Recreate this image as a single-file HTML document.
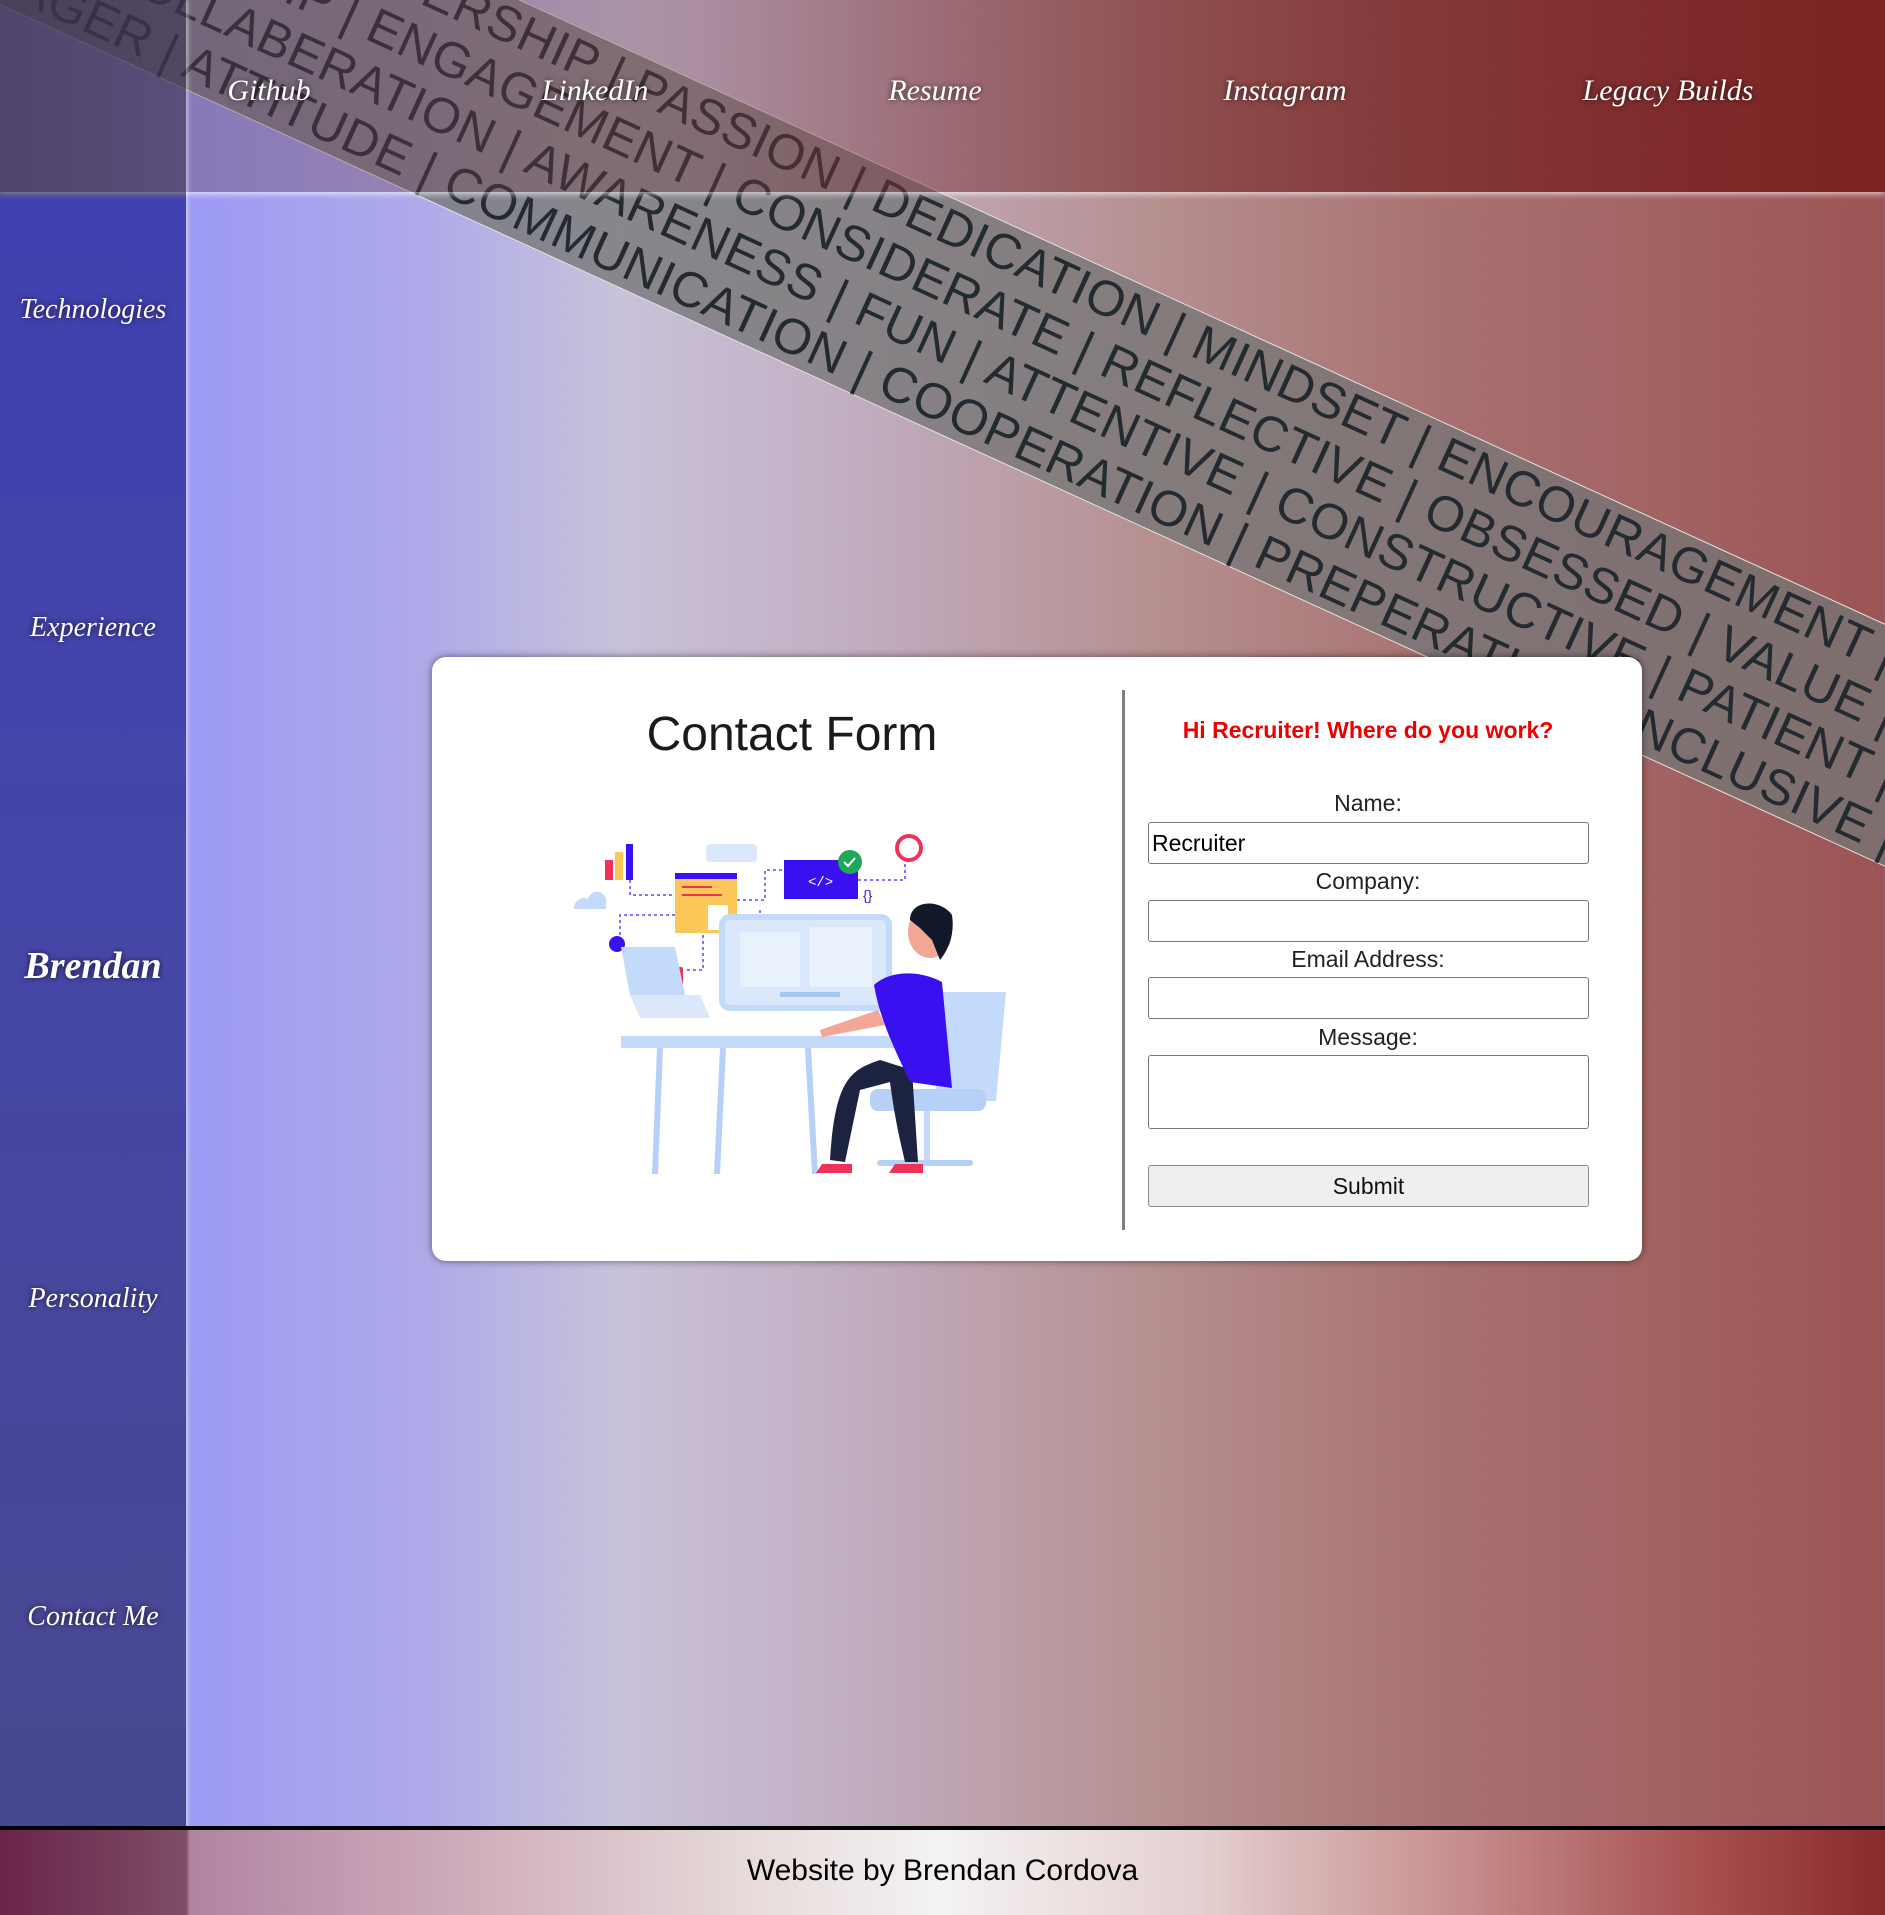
<!DOCTYPE html>
<html><head><meta charset="utf-8"><style>
*{margin:0;padding:0;box-sizing:border-box}
html,body{width:1885px;height:1915px;overflow:hidden}
body{position:relative;font-family:"Liberation Sans",sans-serif;background:linear-gradient(90deg,#9c9af4 186px,#aeaaea 420px,#c8c2da 620px,#c2aec2 850px,#b69090 1150px,#a87070 1450px,#9c5454 1885px)}
.band{position:absolute;left:0;top:-238px;width:2200px;height:221px;transform-origin:0 0;transform:rotate(24.57deg);background:rgba(118,118,118,0.78);border-top:1px solid rgba(255,255,255,.8);border-bottom:1px solid rgba(255,255,255,.8);z-index:1}
.band div{display:flex;justify-content:flex-end;white-space:nowrap;height:55px;line-height:55px;font-size:50px;color:#232a30;letter-spacing:0.5px}
.hdr{position:absolute;left:0;top:0;width:1885px;height:192px;z-index:2;background:linear-gradient(90deg,rgba(70,50,70,.55) 0,rgba(95,60,80,.35) 186px,rgba(120,60,70,.35) 700px,rgba(120,40,40,.7) 1300px,rgba(122,32,32,.95) 1885px);box-shadow:0 2px 6px rgba(255,255,255,.7)}
.hdr span,.side span{position:absolute;color:#fff;font-family:"Liberation Serif",serif;font-style:italic;text-shadow:0 0 6px rgba(0,0,0,.7);transform:translateX(-50%);white-space:nowrap}
.hdr span{top:74px;font-size:30px}
.side{position:absolute;left:0;top:0;width:186px;height:1915px;z-index:3;background:linear-gradient(180deg,rgba(60,50,80,.6) 0,rgba(60,50,80,.6) 192px,#4040b0 200px,#4646a8 900px,#484890 1828px);box-shadow:2px 0 4px rgba(255,255,255,.5)}
.side span{left:93px;font-size:28px}
.foot{position:absolute;left:0;top:1826px;width:1885px;height:89px;border-top:4px solid #000;z-index:4;background:linear-gradient(90deg,#6a2448 0,#7e4e68 186px,#b284a2 190px,#d2b2be 500px,#e8dcdc 760px,#f4f2f2 940px,#e4d0d0 1200px,#c89090 1450px,#a85050 1700px,#8a2a2a 1885px);text-align:center;font-size:30px;line-height:82px;color:#000}
.card{position:absolute;left:432px;top:657px;width:1210px;height:604px;background:#fff;border-radius:14px;box-shadow:0 0 8px rgba(0,0,0,.5);z-index:5}
.title{position:absolute;left:15px;width:690px;top:50px;text-align:center;font-size:48px;color:#1a1a1a}
.div{position:absolute;left:690px;top:33px;width:3px;height:540px;background:#808080}
.red{position:absolute;left:716px;width:440px;top:60px;text-align:center;color:#e00;font-size:23px;font-weight:bold}
.lab{position:absolute;left:716px;width:440px;text-align:center;font-size:23px;color:#222}
.inp{position:absolute;left:716px;width:441px;height:42px;border:1px solid #767676;border-radius:3px;background:#fff;font-size:23px;padding-left:3px;line-height:40px;color:#000}
.btn{position:absolute;left:716px;width:441px;top:508px;height:42px;border:1px solid #8a8a8a;border-radius:3px;background:#efefef;text-align:center;font-size:23px;line-height:40px;color:#111}
</style></head><body>
<div class="band">
<div style="padding-right:105px">MANAGEMENT | MENTORSHIP | LEADERSHIP | PASSION | DEDICATION | MINDSET | ENCOURAGEMENT |</div>
<div style="padding-right:80px">RELATIONSHIP | OWNERSHIP | ENGAGEMENT | CONSIDERATE | REFLECTIVE | OBSESSED | VALUE |</div>
<div style="padding-right:54px">TEAMWORK | COLLABERATION | AWARENESS | FUN | ATTENTIVE | CONSTRUCTIVE | PATIENT |</div>
<div style="padding-right:29px">PROJECT MANAGER | ATTITUDE | COMMUNICATION | COOPERATION | PREPERATION | INCLUSIVE |</div>
</div>
<div class="hdr">
<span style="left:269px">Github</span><span style="left:595px">LinkedIn</span><span style="left:935px">Resume</span><span style="left:1285px">Instagram</span><span style="left:1668px">Legacy Builds</span>
</div>
<div class="side">
<span style="top:294px">Technologies</span>
<span style="top:612px">Experience</span>
<span style="top:944px;font-size:38px;font-weight:bold">Brendan</span>
<span style="top:1283px">Personality</span>
<span style="top:1601px">Contact Me</span>
</div>
<div class="card">
<div class="title">Contact Form</div>
<svg style="position:absolute;left:128px;top:163px" width="480" height="370" viewBox="0 0 480 370">
<g fill="none" stroke="#5a4cf0" stroke-width="1.5" stroke-dasharray="3 3">
<path d="M70 60 V75 H118"/><path d="M177 80 H205 V50 H224"/><path d="M298 60 H345 V40"/><path d="M115 95 H60 V120"/><path d="M143 115 V150 H125"/><path d="M200 90 V115"/></g>
<rect x="45" y="40" width="8" height="20" fill="#f0325a"/><rect x="55" y="32" width="8" height="28" fill="#fcc85a"/><rect x="66" y="24" width="7" height="36" fill="#3a10f0"/>
<rect x="146" y="24" width="51" height="18" rx="4" fill="#dbe8fb"/>
<path d="M14 89 a10 10 0 0 1 14 -10 a9 9 0 0 1 18 4 v6 z" fill="#c4dafa"/>
<rect x="115" y="53" width="62" height="60" fill="#fcc85a"/><rect x="115" y="53" width="62" height="6" fill="#3a10f0"/>
<rect x="148" y="85" width="20" height="25" fill="#fff"/>
<g fill="#f0325a"><rect x="122" y="66" width="30" height="2"/><rect x="122" y="74" width="40" height="2"/></g>
<rect x="224" y="40" width="74" height="39" fill="#3a10f0"/><text x="248" y="66" fill="#fff" font-size="14" font-family="Liberation Mono">&lt;/&gt;</text>
<circle cx="290" cy="42" r="12" fill="#1fa85a"/><path d="M284 42 l4 4 l7 -8" stroke="#fff" stroke-width="2" fill="none"/>
<circle cx="349" cy="28" r="12" fill="none" stroke="#f0325a" stroke-width="4"/>
<text x="303" y="80" fill="#3a10f0" font-size="14">{}</text>
<circle cx="57" cy="124" r="8" fill="#3a10f0"/>
<path d="M198 118 a10 10 0 0 1 18 0 a8 8 0 0 1 0 14 h-22 a7 7 0 0 1 4 -14z" fill="#3a10f0"/>
<rect x="107" y="147" width="16" height="18" rx="2" fill="#f0325a"/>
<rect x="162" y="97" width="167" height="91" rx="8" fill="#dbe8fb" stroke="#c4dafa" stroke-width="6"/>
<rect x="180" y="112" width="60" height="55" fill="#e9f1fd"/><rect x="250" y="107" width="62" height="60" fill="#e9f1fd"/>
<rect x="220" y="172" width="60" height="5" fill="#a8c6f5"/>
<path d="M61 127 H115 L125 175 H70 Z" fill="#c4dafa"/><path d="M70 175 H140 L150 198 H80Z" fill="#dbe8fb"/>
<rect x="61" y="216" width="276" height="12" fill="#c4dafa"/>
<path d="M103 228 L98 354 L92 354 L97 228Z" fill="#b6d0f7"/><path d="M166 228 L160 354 L154 354 L160 228Z" fill="#b6d0f7"/><path d="M251 228 L258 354 L252 354 L245 228Z" fill="#b6d0f7"/>
<path d="M376 172 L446 172 L436 281 L376 281Z" fill="#c4dafa"/><rect x="310" y="269" width="116" height="22" rx="8" fill="#b6d0f7"/>
<rect x="364" y="291" width="6" height="52" fill="#c4dafa"/><path d="M320 343 H410" stroke="#b6d0f7" stroke-width="6" stroke-linecap="round"/>
<path d="M320 240 C290 250 275 260 270 340 L285 342 L300 270 L330 262 C335 300 340 320 345 342 L358 342 L352 250Z" fill="#1c2340"/>
<path d="M314 165 C330 150 360 150 382 162 L392 268 L350 262 C335 230 320 200 314 165Z" fill="#3a10f0"/>
<path d="M318 190 L260 210 L262 217 L325 205Z" fill="#f2a796"/>
<ellipse cx="370" cy="112" rx="22" ry="26" fill="#f2a796"/>
<path d="M350 100 C350 80 380 78 392 95 C395 115 388 130 380 140 L372 120 L360 108Z" fill="#111827"/>
<path d="M262 344 h30 v9 h-36z M335 344 h28 v9 h-34z" fill="#f0325a"/>
</svg>
<div class="div"></div>
<div class="red">Hi Recruiter! Where do you work?</div>
<div class="lab" style="top:133px">Name:</div>
<div class="inp" style="top:165px">Recruiter</div>
<div class="lab" style="top:211px">Company:</div>
<div class="inp" style="top:243px"></div>
<div class="lab" style="top:289px">Email Address:</div>
<div class="inp" style="top:320px"></div>
<div class="lab" style="top:367px">Message:</div>
<div class="inp" style="top:398px;height:74px"></div>
<div class="btn">Submit</div>
</div>
<div class="foot">Website by Brendan Cordova</div>
</body></html>
